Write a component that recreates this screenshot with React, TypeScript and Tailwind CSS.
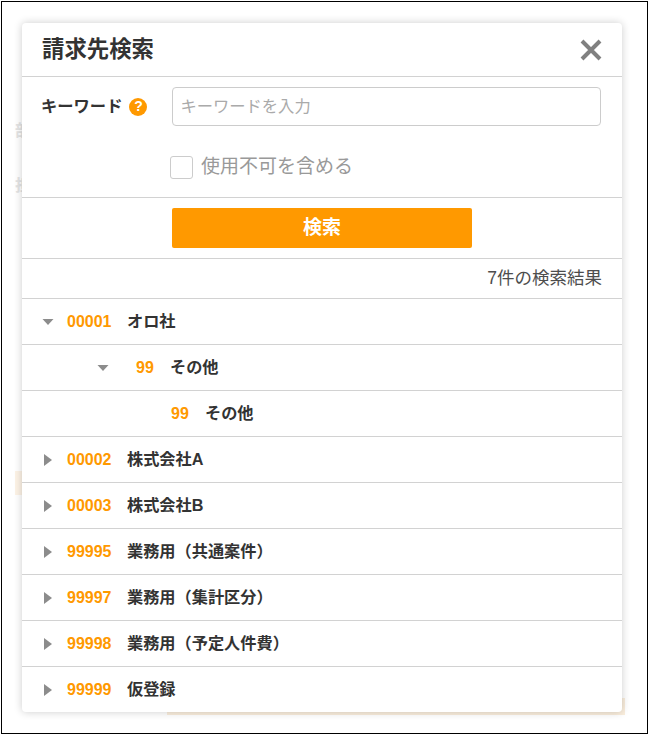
type Row = { code: string; name: string; open?: boolean; arrow?: boolean; indent?: number };

const rows: Row[] = [
  { code: "00001", name: "オロ社", open: true, arrow: true, indent: 0 },
  { code: "99", name: "その他", open: true, arrow: true, indent: 1 },
  { code: "99", name: "その他", indent: 2 },
  { code: "00002", name: "株式会社A", arrow: true, indent: 0 },
  { code: "00003", name: "株式会社B", arrow: true, indent: 0 },
  { code: "99995", name: "業務用（共通案件）", arrow: true, indent: 0 },
  { code: "99997", name: "業務用（集計区分）", arrow: true, indent: 0 },
  { code: "99998", name: "業務用（予定人件費）", arrow: true, indent: 0 },
  { code: "99999", name: "仮登録", arrow: true, indent: 0 },
];

function Arrow({ open }: { open?: boolean }) {
  return (
    <svg width="12" height="12" viewBox="0 0 12 12" className="shrink-0">
      {open ? <path d="M0.5 3h11L6 9z" fill="#8c8c8c" /> : <path d="M2 0v12L10 6z" fill="#8c8c8c" />}
    </svg>
  );
}

function TreeRow({ row }: { row: Row }) {
  return (
    <div className="flex h-[46px] items-center border-t border-[#d2d2d2] text-[16px] font-bold leading-none text-[#333333]">
      {row.indent === 0 && (
        <div className="flex items-center pl-[20px]">
          <Arrow open={row.open} />
          <span className="ml-[13px] w-[60px] text-[#ff9900]">{row.code}</span>
        </div>
      )}
      {row.indent === 1 && (
        <div className="flex items-center pl-[75px]">
          <Arrow open={row.open} />
          <span className="ml-[27px] w-[34px] text-[#ff9900]">{row.code}</span>
        </div>
      )}
      {row.indent === 2 && (
        <div className="flex items-center pl-[149px]">
          <span className="w-[34px] text-[#ff9900]">{row.code}</span>
        </div>
      )}
      <span className="text-[16.2px]">{row.name}</span>
    </div>
  );
}

export default function App() {
  return (
    <div className="h-[736px] w-[651px] bg-white pl-px pt-px font-['Liberation_Sans','Noto_Sans_CJK_JP',sans-serif]">
      <div className="relative h-[733px] w-[647px] overflow-hidden border border-black bg-white">
        {/* faint page behind the dialog */}
        <span className="absolute left-[13px] top-[117px] text-[16px] font-bold text-[#e4e4e4]">部</span>
        <span className="absolute left-[13px] top-[172px] text-[16px] font-bold text-[#e4e4e4]">担</span>
        <div className="absolute left-[13px] top-[469px] h-[24px] w-[10px] bg-[#fdf3e6]" />
        <div className="absolute left-[165px] top-[696px] h-[17px] w-[458px] bg-[#faeedd]" />

        <div className="relative ml-[20px] mt-[21px] w-[600px] rounded-[4px] bg-white shadow-[0_0_8px_rgba(0,0,0,0.2)]">
          <div className="flex h-[53px] items-center justify-between pl-[20px] pr-[20px]">
            <h1 className="text-[22.4px] font-bold text-[#333333]">請求先検索</h1>
            <svg width="22" height="22" viewBox="0 0 22 22">
              <path d="M2 2L20 20M20 2L2 20" stroke="#808080" strokeWidth="4" />
            </svg>
          </div>

          <div className="h-[121px] border-t border-[#d2d2d2]">
            <div className="flex items-center pt-[10px]">
              <span className="ml-[19px] text-[16.3px] font-bold text-[#333333]">キーワード</span>
              <span className="ml-[7px] flex h-[18px] w-[18px] items-center justify-center rounded-full bg-[#ff9900] text-[14px] font-bold text-white">
                ?
              </span>
              <input
                placeholder="キーワードを入力"
                className="ml-[25px] h-[39px] w-[429px] rounded-[4px] border border-[#cccccc] px-[7px] text-[16.3px] placeholder:text-[#aaaaaa]"
              />
            </div>
            <div className="ml-[148px] mt-[27px] flex items-center">
              <span className="h-[23px] w-[23px] rounded-[3px] border border-[#cccccc] bg-white" />
              <span className="ml-[8px] text-[19px] text-[#999999]">使用不可を含める</span>
            </div>
          </div>

          <div className="h-[61px] border-t border-[#d2d2d2] pl-[150px] pt-[10px]">
            <button className="flex h-[40px] w-[300px] items-center justify-center rounded-[2px] bg-[#ff9900] text-[19px] font-bold text-white">
              検索
            </button>
          </div>

          <div className="flex h-[40px] items-center justify-end border-t border-[#d2d2d2] pr-[20px] text-[17.5px] text-[#4d4d4d]">
            7件の検索結果
          </div>

          {rows.map((row, i) => (
            <TreeRow key={i} row={row} />
          ))}
        </div>
      </div>
    </div>
  );
}
